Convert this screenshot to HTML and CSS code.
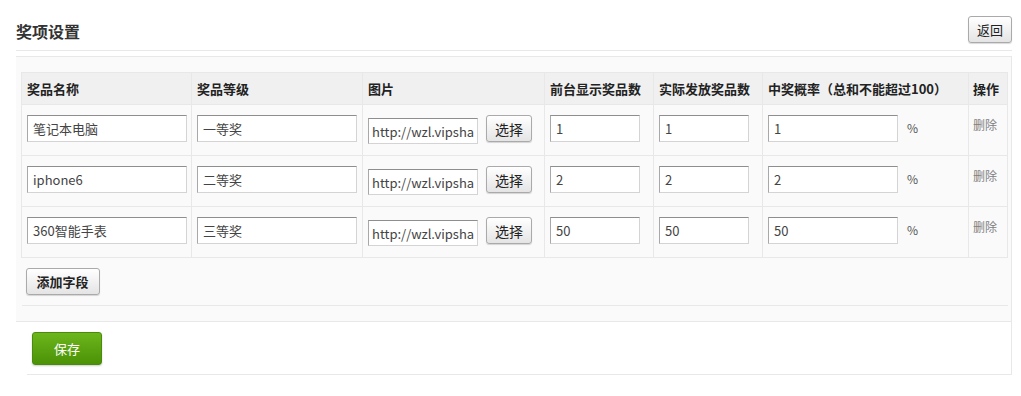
FILE: index.html
```html
<!DOCTYPE html>
<html lang="zh-CN">
<head>
  <meta charset="UTF-8" />
  <title>奖项设置</title>
  <link rel="stylesheet" href="styles.css">
</head>
<body>
  <div class="page">
    <!-- 标题栏 -->
    <div class="page-head">
      <h2>奖项设置</h2>
      <button class="btn" type="button">返回</button>
    </div>

    <div class="box">
      <div class="box-body">
        <table class="prize-table">
          <colgroup>
            <col style="width:170px">
            <col style="width:171px">
            <col style="width:182px">
            <col style="width:109px">
            <col style="width:109px">
            <col style="width:206px">
            <col style="width:39px">
          </colgroup>
          <thead>
            <tr>
              <th>奖品名称</th>
              <th>奖品等级</th>
              <th>图片</th>
              <th>前台显示奖品数</th>
              <th>实际发放奖品数</th>
              <th>中奖概率（总和不能超过100）</th>
              <th>操作</th>
            </tr>
          </thead>
          <tbody>
            <tr>
              <td><input class="ipt ipt-name" type="text" value="笔记本电脑"></td>
              <td><input class="ipt ipt-name" type="text" value="一等奖"></td>
              <td><input class="ipt ipt-url" type="text" value="http://wzl.vipshang.com/prize1.jpg"><button class="btn btn-pick" type="button">选择</button></td>
              <td><input class="ipt ipt-num" type="text" value="1"></td>
              <td><input class="ipt ipt-num" type="text" value="1"></td>
              <td><input class="ipt ipt-rate" type="text" value="1"><span class="unit">%</span></td>
              <td><a class="del" href="#">删除</a></td>
            </tr>
            <tr>
              <td><input class="ipt ipt-name" type="text" value="iphone6"></td>
              <td><input class="ipt ipt-name" type="text" value="二等奖"></td>
              <td><input class="ipt ipt-url" type="text" value="http://wzl.vipshang.com/prize2.jpg"><button class="btn btn-pick" type="button">选择</button></td>
              <td><input class="ipt ipt-num" type="text" value="2"></td>
              <td><input class="ipt ipt-num" type="text" value="2"></td>
              <td><input class="ipt ipt-rate" type="text" value="2"><span class="unit">%</span></td>
              <td><a class="del" href="#">删除</a></td>
            </tr>
            <tr>
              <td><input class="ipt ipt-name" type="text" value="360智能手表"></td>
              <td><input class="ipt ipt-name" type="text" value="三等奖"></td>
              <td><input class="ipt ipt-url" type="text" value="http://wzl.vipshang.com/prize3.jpg"><button class="btn btn-pick" type="button">选择</button></td>
              <td><input class="ipt ipt-num" type="text" value="50"></td>
              <td><input class="ipt ipt-num" type="text" value="50"></td>
              <td><input class="ipt ipt-rate" type="text" value="50"><span class="unit">%</span></td>
              <td><a class="del" href="#">删除</a></td>
            </tr>
            <tr class="add-row">
              <td colspan="7"><button class="btn btn-add" type="button">添加字段</button></td>
            </tr>
          </tbody>
        </table>
      </div>
      <div class="box-foot">
        <button class="btn-save" type="button">保存</button>
      </div>
    </div>
  </div>
</body>
</html>
```

FILE: styles.css
```css
/* reset */
* {
  box-sizing: border-box;
  margin: 0;
  padding: 0;
}
body {
  background: #fff;
  color: #333;
  font-family: "Noto Sans CJK SC", "Liberation Sans", sans-serif;
  font-size: 13px;
}
.page {
  padding: 16px 9px 0 16px;
}

/* header */
.page-head {
  display: flex;
  justify-content: space-between;
  align-items: flex-start;
  height: 35px;
  border-bottom: 1px solid #e8e8e8;
}
.page-head h2 {
  font-size: 16px;
  font-weight: bold;
  line-height: 20px;
  margin-top: 5px;
  color: #333;
}

/* buttons */
.btn {
  height: 27px;
  padding: 0 8px;
  border: 1px solid #aaa;
  border-radius: 3px;
  background: linear-gradient(#fff, #e4e4e4);
  box-shadow: 0 1px 1px rgba(0, 0, 0, 0.15);
  font-family: inherit;
  font-size: 13px;
  color: #222;
  cursor: pointer;
}

/* box */
.box {
  margin-top: 5px;
  border-top: 1px solid #e8e8e8;
  border-right: 1px solid #e8e8e8;
}
.box-body {
  background: #fafafa;
  padding: 15px 4px 15px 5px;
  border-bottom: 1px solid #e8e8e8;
}
.box-foot {
  padding: 10px 0 9px 5px;
  margin-left: 11px;
  border-bottom: 1px solid #e8e8e8;
}

/* table */
.prize-table {
  width: 986px;
  table-layout: fixed;
  border-collapse: collapse;
}
.prize-table th,
.prize-table td {
  border: 1px solid #e8e8e8;
  text-align: left;
  vertical-align: top;
  white-space: nowrap;
}
.prize-table th {
  height: 32px;
  padding: 0 5px;
  background: #f0f0f0;
  font-weight: bold;
  vertical-align: middle;
  color: #222;
}
.prize-table td {
  height: 51px;
  padding: 10px 5px 0;
}
.prize-table th:last-child,
.prize-table td:last-child {
  padding-left: 4px;
}
.add-row td {
  height: 48px;
  padding-top: 10px;
  border-left: none;
  border-right: none;
}

/* inputs */
.ipt {
  height: 27px;
  padding: 0 5px;
  border: 1px solid #d4d4d4;
  border-top-color: #8e8e8e;
  border-left-color: #a8a8a8;
  background: #fff;
  font-family: inherit;
  font-size: 13px;
  color: #444;
  vertical-align: top;
}
.ipt-name { width: 160px; }
.ipt-url {
  width: 110px;
  margin-top: 3px;
  height: 26px;
  padding: 0 3px;
}
.ipt-num { width: 90px; }
.ipt-rate { width: 130px; }

.btn-pick {
  margin-left: 8px;
  width: 46px;
  padding: 0;
  vertical-align: top;
  font-size: 14px;
}
.btn-add {
  width: 74px;
  padding: 0;
  font-weight: bold;
  font-size: 13px;
}
.unit {
  display: inline-block;
  margin-left: 9px;
  margin-top: 4px;
  font-size: 12px;
  color: #555;
  vertical-align: top;
}
.del {
  display: inline-block;
  font-size: 12px;
  line-height: 16px;
  color: #808080;
  text-decoration: none;
}

/* save */
.btn-save {
  width: 70px;
  height: 33px;
  border: 1px solid #4a8a0c;
  border-radius: 3px;
  background: linear-gradient(#6cb61c, #4b9206);
  box-shadow: 0 1px 2px rgba(0, 0, 0, 0.2);
  font-family: inherit;
  font-size: 13px;
  color: #fff;
  cursor: pointer;
}
```
